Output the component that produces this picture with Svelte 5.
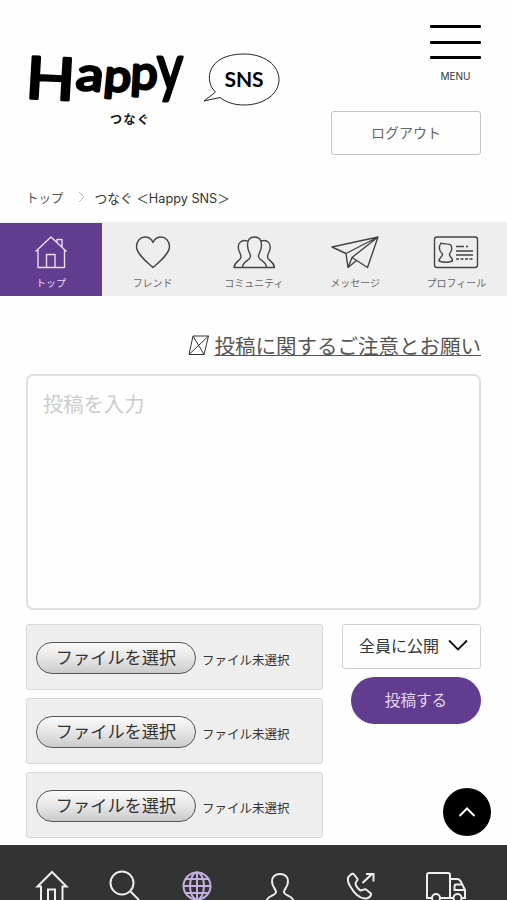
<script lang="ts">
  // ナビゲーションの型定義
  interface NavItem {
    id: string;
    label: string;
  }

  const navItems: NavItem[] = [
    { id: 'top', label: 'トップ' },
    { id: 'friend', label: 'フレンド' },
    { id: 'community', label: 'コミュニティ' },
    { id: 'message', label: 'メッセージ' },
    { id: 'profile', label: 'プロフィール' }
  ];

  const files = [1, 2, 3];

  let active = 'top';
  let body = '';

  function scrollToTop() {
    window.scrollTo({ top: 0, behavior: 'smooth' });
  }
</script>

<svelte:head>
  <title>つなぐ ＜Happy SNS＞</title>
</svelte:head>

<div class="page">
  <header class="header">
    <div class="brand">
      <div class="logo">
        <svg class="logo-name" width="160" height="60" viewBox="0 0 160 60">
          <text class="happy">
            <tspan x="1" y="46" textLength="49" lengthAdjust="spacingAndGlyphs" font-size="58" rotate="3">H</tspan>
            <tspan x="51" y="37" textLength="27" lengthAdjust="spacingAndGlyphs" font-size="46" rotate="6">a</tspan>
            <tspan x="79" y="38" textLength="27" lengthAdjust="spacingAndGlyphs" font-size="44" rotate="5">p</tspan>
            <tspan x="106" y="36" textLength="27" lengthAdjust="spacingAndGlyphs" font-size="46" rotate="3">p</tspan>
            <tspan x="133" y="38" textLength="26" lengthAdjust="spacingAndGlyphs" font-size="64">y</tspan>
          </text>
        </svg>
        <span class="logo-sub">つなぐ</span>
      </div>
      <div class="bubble">
        <svg width="80" height="56" viewBox="0 0 80 56">
          <path d="M13.500 40C2 30 4 2 42 2c20 0 35 11 35 25.500S62 53 42 53c-10 0-18-2.800-24-7.500L2 49z" />
        </svg>
        <span>SNS</span>
      </div>
    </div>
    <div class="header-side">
      <button class="menu" aria-label="MENU">
        <i></i><i></i><i></i>
        <span>MENU</span>
      </button>
      <button class="logout">ログアウト</button>
    </div>
  </header>

  <div class="breadcrumb">
    <span>トップ</span>
    <svg width="7" height="12" viewBox="0 0 7 12"><path d="M1 1l5 5-5 5" /></svg>
    <span class="current">つなぐ ＜Happy SNS＞</span>
  </div>

  <nav class="tabs">
    {#each navItems as item}
      <button class="tab" class:active={active === item.id} on:click={() => (active = item.id)}>
        {#if item.id === 'top'}
          <svg width="48" height="36" viewBox="0 0 48 36">
            <path d="M8.500 17.500L24 3l15.500 14.500M11 16v17.500h26.500V16M19.500 33.500V20.500h8.500v13M30 8V5.500h5V13" />
          </svg>
        {:else if item.id === 'friend'}
          <svg width="48" height="36" viewBox="0 0 48 36">
            <path d="M24 33.500C18 28 7.500 20 7.500 12.500 7.500 7 11.500 3 16 3c3.500 0 6.500 2 8 5.500C25.500 5 28.500 3 32 3c4.500 0 8.500 4 8.500 9.500C40.500 20 30 28 24 33.500z" />
          </svg>
        {:else if item.id === 'community'}
          <svg width="48" height="36" viewBox="0 0 48 36">
            <path d="M17.500 7c-7-2-10 3-9 8 .5 3 2.500 5 2.500 8 0 4-6.500 4-7 10.500h40.500c-.5-6.500-7-6.500-7-10.500 0-3 2-5 2.500-8 1-5-2-10-9-8" />
            <path d="M12.500 33.500c0-7 7.500-6.500 8-11 .3-3-3-5-3-11.500 0-5 2.500-8 7-8s7 3 7 8c0 6.500-3.300 8.500-3 11.500.5 4.500 8 4 8 11" />
          </svg>
        {:else if item.id === 'message'}
          <svg width="48" height="36" viewBox="0 0 48 36">
            <path d="M47 3L1 13l14 6.500L47 3 36.500 33.500 21 23.500 47 3M15 19.500l2 14 4-10M17 33.500l8.500-7" />
          </svg>
        {:else}
          <svg width="48" height="36" viewBox="0 0 48 36">
            <rect x="2.500" y="3" width="43" height="30.500" rx="2.500" />
            <path d="M9 9c2 2 8-.5 10 2.500 1.500 3 1 5.500-1.500 8.500-.5 3 3 3 3 7-4 1.500-9.500 1.500-13.500 0 0-4 4-4 3.500-7C7 17 6.500 13 9 9z" />
            <path d="M24 12.500h8M34 12.500h2M24 17h17M24 21h17" />
            <path stroke-dasharray="3 1.500" d="M24 25h17" />
          </svg>
        {/if}
        <span>{item.label}</span>
      </button>
    {/each}
  </nav>

  <main class="content">
    <div class="notice">
      <svg width="22" height="22" viewBox="0 0 22 22">
        <path d="M5 2h15.500L16 20.500H1zM5 2l11 18.500M20.500 2L1 20.500" />
      </svg>
      <a href="#notice">投稿に関するご注意とお願い</a>
    </div>

    <textarea bind:value={body} placeholder="投稿を入力"></textarea>

    <div class="form-row">
      <div class="files">
        {#each files as file (file)}
          <div class="file">
            <button class="file-button">ファイルを選択</button>
            <span>ファイル未選択</span>
          </div>
        {/each}
      </div>
      <div class="actions">
        <button class="range">
          <span>全員に公開</span>
          <svg width="20" height="12" viewBox="0 0 20 12"><path d="M1 1.500l9 9 9-9" /></svg>
        </button>
        <button class="submit">投稿する</button>
      </div>
    </div>
  </main>

  <button class="to-top" aria-label="ページの先頭へ" on:click={scrollToTop}>
    <svg width="18" height="12" viewBox="0 0 18 12"><path d="M1.500 10L9 2.500l7.500 7.500" /></svg>
  </button>

  <footer class="footer">
    <div class="footer-group">
      <svg width="34" height="36" viewBox="0 0 34 36">
        <path d="M2.500 17.500L17 3l14.500 14.500h-4V34H20V20.500h-7V34H6V17.500z" />
      </svg>
      <svg width="34" height="36" viewBox="0 0 34 36">
        <circle cx="14" cy="14" r="11.500" /><path d="M22.500 22.500L31 31" />
      </svg>
      <svg class="globe" width="34" height="36" viewBox="0 0 34 36">
        <circle cx="17" cy="17" r="13.500" />
        <ellipse cx="17" cy="17" rx="7" ry="13.500" />
        <path d="M17 3.500v27M3.500 17h27M5.500 10h23M5.500 24h23" />
      </svg>
    </div>
    <div class="footer-group wide">
      <svg width="34" height="36" viewBox="0 0 34 36">
        <path d="M3 34c0-8 9.500-6.500 10-11 .3-2.500-4-5-4-10.500 0-4.500 3-7.500 8-7.500s8 3 8 7.500c0 5.500-4.300 8-4 10.500.5 4.500 10 3 10 11" />
      </svg>
      <svg width="34" height="36" viewBox="0 0 34 36">
        <path d="M6.500 6C3 8 3 12 6 17c4 7 9 12 14.500 12.500 4 .5 7-2.500 6.500-5l-5-4c-2-1-4 1.500-5.500 1-2-1-5-5-5-7 0-2 2.500-2.500 2-4.500L10 5.500C9 4 7.500 5 6.500 6zM18.500 14l10-9.500M22 5h7.500v7.500" />
      </svg>
      <svg class="truck" width="42" height="36" viewBox="0 0 42 36">
        <path d="M7 26H2V3q0-2 2-2h19q2 0 2 2v23H15M25 7h7q3 0 4.500 4l3.500 7v8h-4M29 26h-4M37.500 12.500H31q-1.500 0-1.500 2V18H39" />
        <circle cx="11" cy="26" r="4" /><circle cx="32.500" cy="26" r="4" />
      </svg>
    </div>
  </footer>
</div>

<style>
  :global(body) {
    background: #fefefe;
  }

  .page {
    position: relative;
    display: flex;
    flex-direction: column;
    height: 900px;
    overflow: hidden;
    box-sizing: border-box;
    color: #333;
    font-family: "Liberation Sans", "Noto Sans CJK JP", sans-serif;
  }

  .page * {
    box-sizing: border-box;
  }

  button {
    margin: 0;
    padding: 0;
    border: none;
    background: none;
    color: inherit;
    font-family: inherit;
    cursor: pointer;
  }

  svg {
    display: block;
    flex-shrink: 0;
    fill: none;
    stroke: currentColor;
  }

  .header {
    display: flex;
    justify-content: space-between;
    height: 185px;
    padding: 25px 26px 0 24px;
    flex-shrink: 0;
  }

  .brand {
    display: flex;
    gap: 18px;
    padding-top: 27px;
  }

  .logo {
    display: flex;
    flex-direction: column;
    width: 160px;
  }

  .logo-name {
    overflow: visible;
  }

  .happy {
    fill: #000;
    stroke: #000;
    stroke-width: 3px;
    stroke-linejoin: round;
    font-family: Lato, sans-serif;
    font-weight: 400;
  }

  .logo-sub {
    margin-left: 86px;
    padding-top: 1px;
    color: #111;
    font-size: 12px;
    font-weight: bold;
    letter-spacing: 1.500px;
    line-height: 14px;
  }

  .bubble {
    display: grid;
    height: 56px;
    color: #222;
  }

  .bubble > * {
    grid-area: 1 / 1;
  }

  .bubble span {
    place-self: center;
    padding: 0 0 3px 4px;
    color: #000;
    font-family: Lato, sans-serif;
    font-size: 21px;
    font-weight: bold;
    line-height: 24px;
  }

  .header-side {
    display: flex;
    flex-direction: column;
    align-items: flex-end;
    justify-content: space-between;
    height: 130px;
  }

  .menu {
    display: flex;
    flex-direction: column;
    align-items: center;
    gap: 12.500px;
    width: 51px;
  }

  .menu i {
    width: 51px;
    height: 3px;
    border-radius: 1px;
    background: #000;
  }

  .menu span {
    margin-top: -2px;
    font-family: Inter, sans-serif;
    font-size: 10px;
    line-height: 12px;
  }

  .logout {
    width: 150px;
    height: 44px;
    border: 1px solid #c4c4c4;
    border-radius: 3px;
    color: #666;
    font-size: 14px;
    line-height: 40px;
  }

  .breadcrumb {
    display: flex;
    align-items: center;
    gap: 14px;
    height: 24px;
    padding: 0 26px;
    color: #555;
    font-size: 12.500px;
    flex-shrink: 0;
  }

  .breadcrumb svg {
    stroke: #bbb;
  }

  .breadcrumb .current {
    margin-left: -4px;
    color: #333;
    font-family: Inter, "Noto Sans CJK JP", sans-serif;
    font-size: 12.700px;
  }

  .tabs {
    display: grid;
    grid-template-columns: 102px repeat(4, 1fr);
    height: 74px;
    margin-top: 13px;
    background: #eee;
    flex-shrink: 0;
  }

  .tab {
    display: flex;
    flex-direction: column;
    align-items: center;
    margin-top: 1px;
    padding-top: 11px;
    color: #666;
    font-size: 10px;
  }

  .tab svg {
    stroke: #444;
    stroke-width: 1.400px;
    stroke-linejoin: round;
  }

  .tab span {
    margin-top: 6px;
    line-height: 16px;
    white-space: nowrap;
  }

  .tab.active {
    background: #623c8f;
    color: #eadcf5;
  }

  .tab.active svg {
    stroke: #eadcf5;
  }

  .content {
    padding: 34px 26px 0;
    flex: 1;
  }

  .notice {
    display: flex;
    align-items: center;
    justify-content: flex-end;
    gap: 4px;
    height: 30px;
    font-size: 20.500px;
  }

  .notice svg {
    margin-right: 1px;
  }

  .notice a {
    color: #555;
    text-decoration: underline;
    text-decoration-thickness: 1px;
    text-underline-offset: 1px;
    white-space: nowrap;
  }

  textarea {
    display: block;
    width: 100%;
    height: 236px;
    margin-top: 14px;
    padding: 12px 15px;
    border: 2px solid #dfdfdf;
    border-radius: 7px;
    background: #fefefe;
    font-family: inherit;
    font-size: 20.300px;
    resize: none;
    outline: none;
  }

  textarea::placeholder {
    color: #ccc;
  }

  .form-row {
    display: flex;
    justify-content: space-between;
    margin-top: 14px;
  }

  .files {
    display: flex;
    flex-direction: column;
    gap: 8px;
    width: 297px;
  }

  .file {
    display: flex;
    align-items: center;
    gap: 7px;
    height: 66px;
    padding: 2px 9px 0;
    border: 1px solid #d9d9d9;
    border-radius: 3px;
    background: #eee;
  }

  .file-button {
    width: 160px;
    height: 32px;
    border: 1.500px solid #555;
    border-radius: 16px;
    background: linear-gradient(#fbfbfb, #e6e6e6 50%, #cbcbcb);
    color: #333;
    font-size: 17.200px;
    line-height: 29px;
    white-space: nowrap;
  }

  .file span {
    margin-left: -1px;
    padding-top: 2px;
    font-size: 12.500px;
  }

  .actions {
    display: flex;
    flex-direction: column;
    align-items: flex-end;
    gap: 8px;
  }

  .range {
    display: flex;
    align-items: center;
    justify-content: space-between;
    width: 139px;
    height: 45px;
    padding: 0 12px 4px 16px;
    border: 1px solid #d0d0d0;
    border-radius: 3px;
    color: #333;
    font-size: 16px;
  }

  .range svg {
    stroke: #111;
    stroke-width: 1.800px;
  }

  .submit {
    width: 130px;
    height: 47px;
    padding-bottom: 3px;
    border-radius: 24px;
    background: #623c8f;
    color: #e4d6f0;
    font-size: 15.600px;
  }

  .to-top {
    position: absolute;
    right: 16px;
    bottom: 64px;
    display: flex;
    align-items: center;
    justify-content: center;
    width: 48px;
    height: 48px;
    border-radius: 50%;
    background: #000;
    color: #fff;
  }

  .to-top svg {
    stroke-width: 2px;
  }

  .footer {
    display: flex;
    gap: 49px;
    height: 55px;
    padding: 24px 0 0 35px;
    overflow: hidden;
    background: #333;
    color: #eee;
    flex-shrink: 0;
  }

  .footer-group {
    display: flex;
    gap: 38.500px;
  }

  .footer-group.wide {
    gap: 47px;
  }

  .footer svg {
    stroke-width: 2px;
  }

  .footer .globe {
    stroke: #c3b0e0;
  }

  .footer .truck {
    margin-top: 3px;
  }
</style>
